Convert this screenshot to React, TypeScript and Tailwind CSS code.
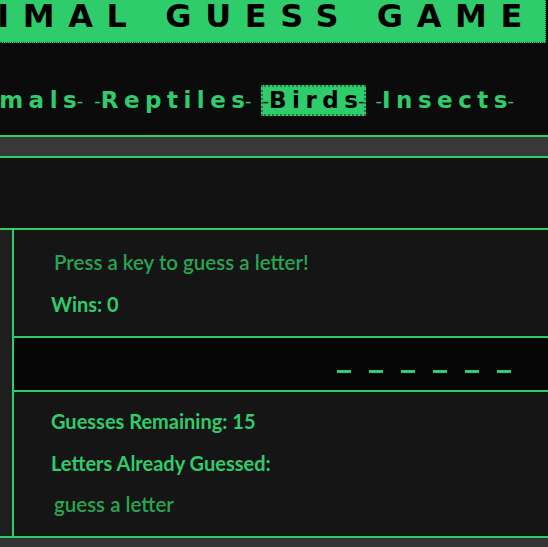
const links = ['Mammals', 'Reptiles', 'Birds', 'Insects'];

const titleFont = { fontFamily: '"DejaVu Sans", sans-serif' };

export default function App() {
  const active = 'Birds';
  const blanks = Array.from({ length: 6 });

  return (
    <div className="w-[548px] h-[547px] overflow-hidden bg-[#333333]" style={{ fontFamily: 'Lato, "Noto Sans", sans-serif' }}>
      {/* header */}
      <div className="bg-[#0b0b0b]">
        <div className="flex items-start justify-end w-[546px] h-[43px] bg-[#2ecc6b] border-b border-r border-dotted border-[#145c30] pr-[9px] overflow-hidden whitespace-nowrap">
          <h1
            className="text-[32px] leading-[32px] font-bold tracking-[13.6px] text-black shrink-0"
            style={titleFont}
          >
            ANIMAL GUESS GAME
          </h1>
        </div>

        <nav className="flex items-start justify-end pr-[32px] pt-[42px] h-[92px] overflow-hidden whitespace-nowrap">
          <ul className="flex items-center gap-[7px] shrink-0" style={titleFont}>
            {links.map((l) => (
              <li
                key={l}
                className={`flex items-center h-[31px] px-[2px] text-[23px] leading-[31px] font-bold ${
                  l === active
                    ? 'bg-[#2ecc6b] text-black outline-2 outline-dotted outline-[#1d7a42] -outline-offset-2'
                    : 'text-[#2ecc6b]'
                }`}
              >
                <span className="text-[18px] font-normal">-</span>
                <span className="tracking-[5.5px] mr-[-5.5px]">{l}</span>
                <span className="text-[18px] font-normal">-</span>
              </li>
            ))}
          </ul>
        </nav>
      </div>

      <div className="h-[23px] bg-[#383838] border-y-2 border-[#2ecc6b]" />
      <div className="h-[70px] bg-[#111111]" />

      {/* game board */}
      <div className="flex border-y-2 border-[#2ecc6b] bg-[#1e1e1e]">
        <div className="w-[12px] shrink-0" />
        <div className="flex-1 border-l-2 border-[#2ecc6b]">
          <div className="h-[106px] bg-[#151515] pl-[40px] pt-[20px]">
            <p className="text-[20.5px] font-semibold text-[#27a552] leading-[24px]">Press a key to guess a letter!</p>
            <p className="mt-[18px] ml-[-3px] text-[20px] font-bold text-[#2ecc6b] leading-[24px]">Wins: 0</p>
          </div>

          <div className="h-[56px] bg-[#060606] border-y-2 border-[#2ecc6b] pl-[323px] pt-[32px] flex gap-[18px]">
            {blanks.map((_, i) => (
              <span key={i} className="w-[14px] h-[3px] bg-[#2ecc6b]" />
            ))}
          </div>

          <div className="h-[144px] bg-[#151515] pl-[37px] pt-[17px]">
            <p className="text-[20px] font-bold text-[#2ecc6b] leading-[24px]">Guesses Remaining: 15</p>
            <p className="mt-[18px] text-[20px] font-bold text-[#2ecc6b] leading-[24px]">Letters Already Guessed:</p>
            <p className="mt-[17px] ml-[3px] text-[20.5px] font-semibold text-[#27a552] leading-[24px]">guess a letter</p>
          </div>
        </div>
      </div>
    </div>
  );
}
